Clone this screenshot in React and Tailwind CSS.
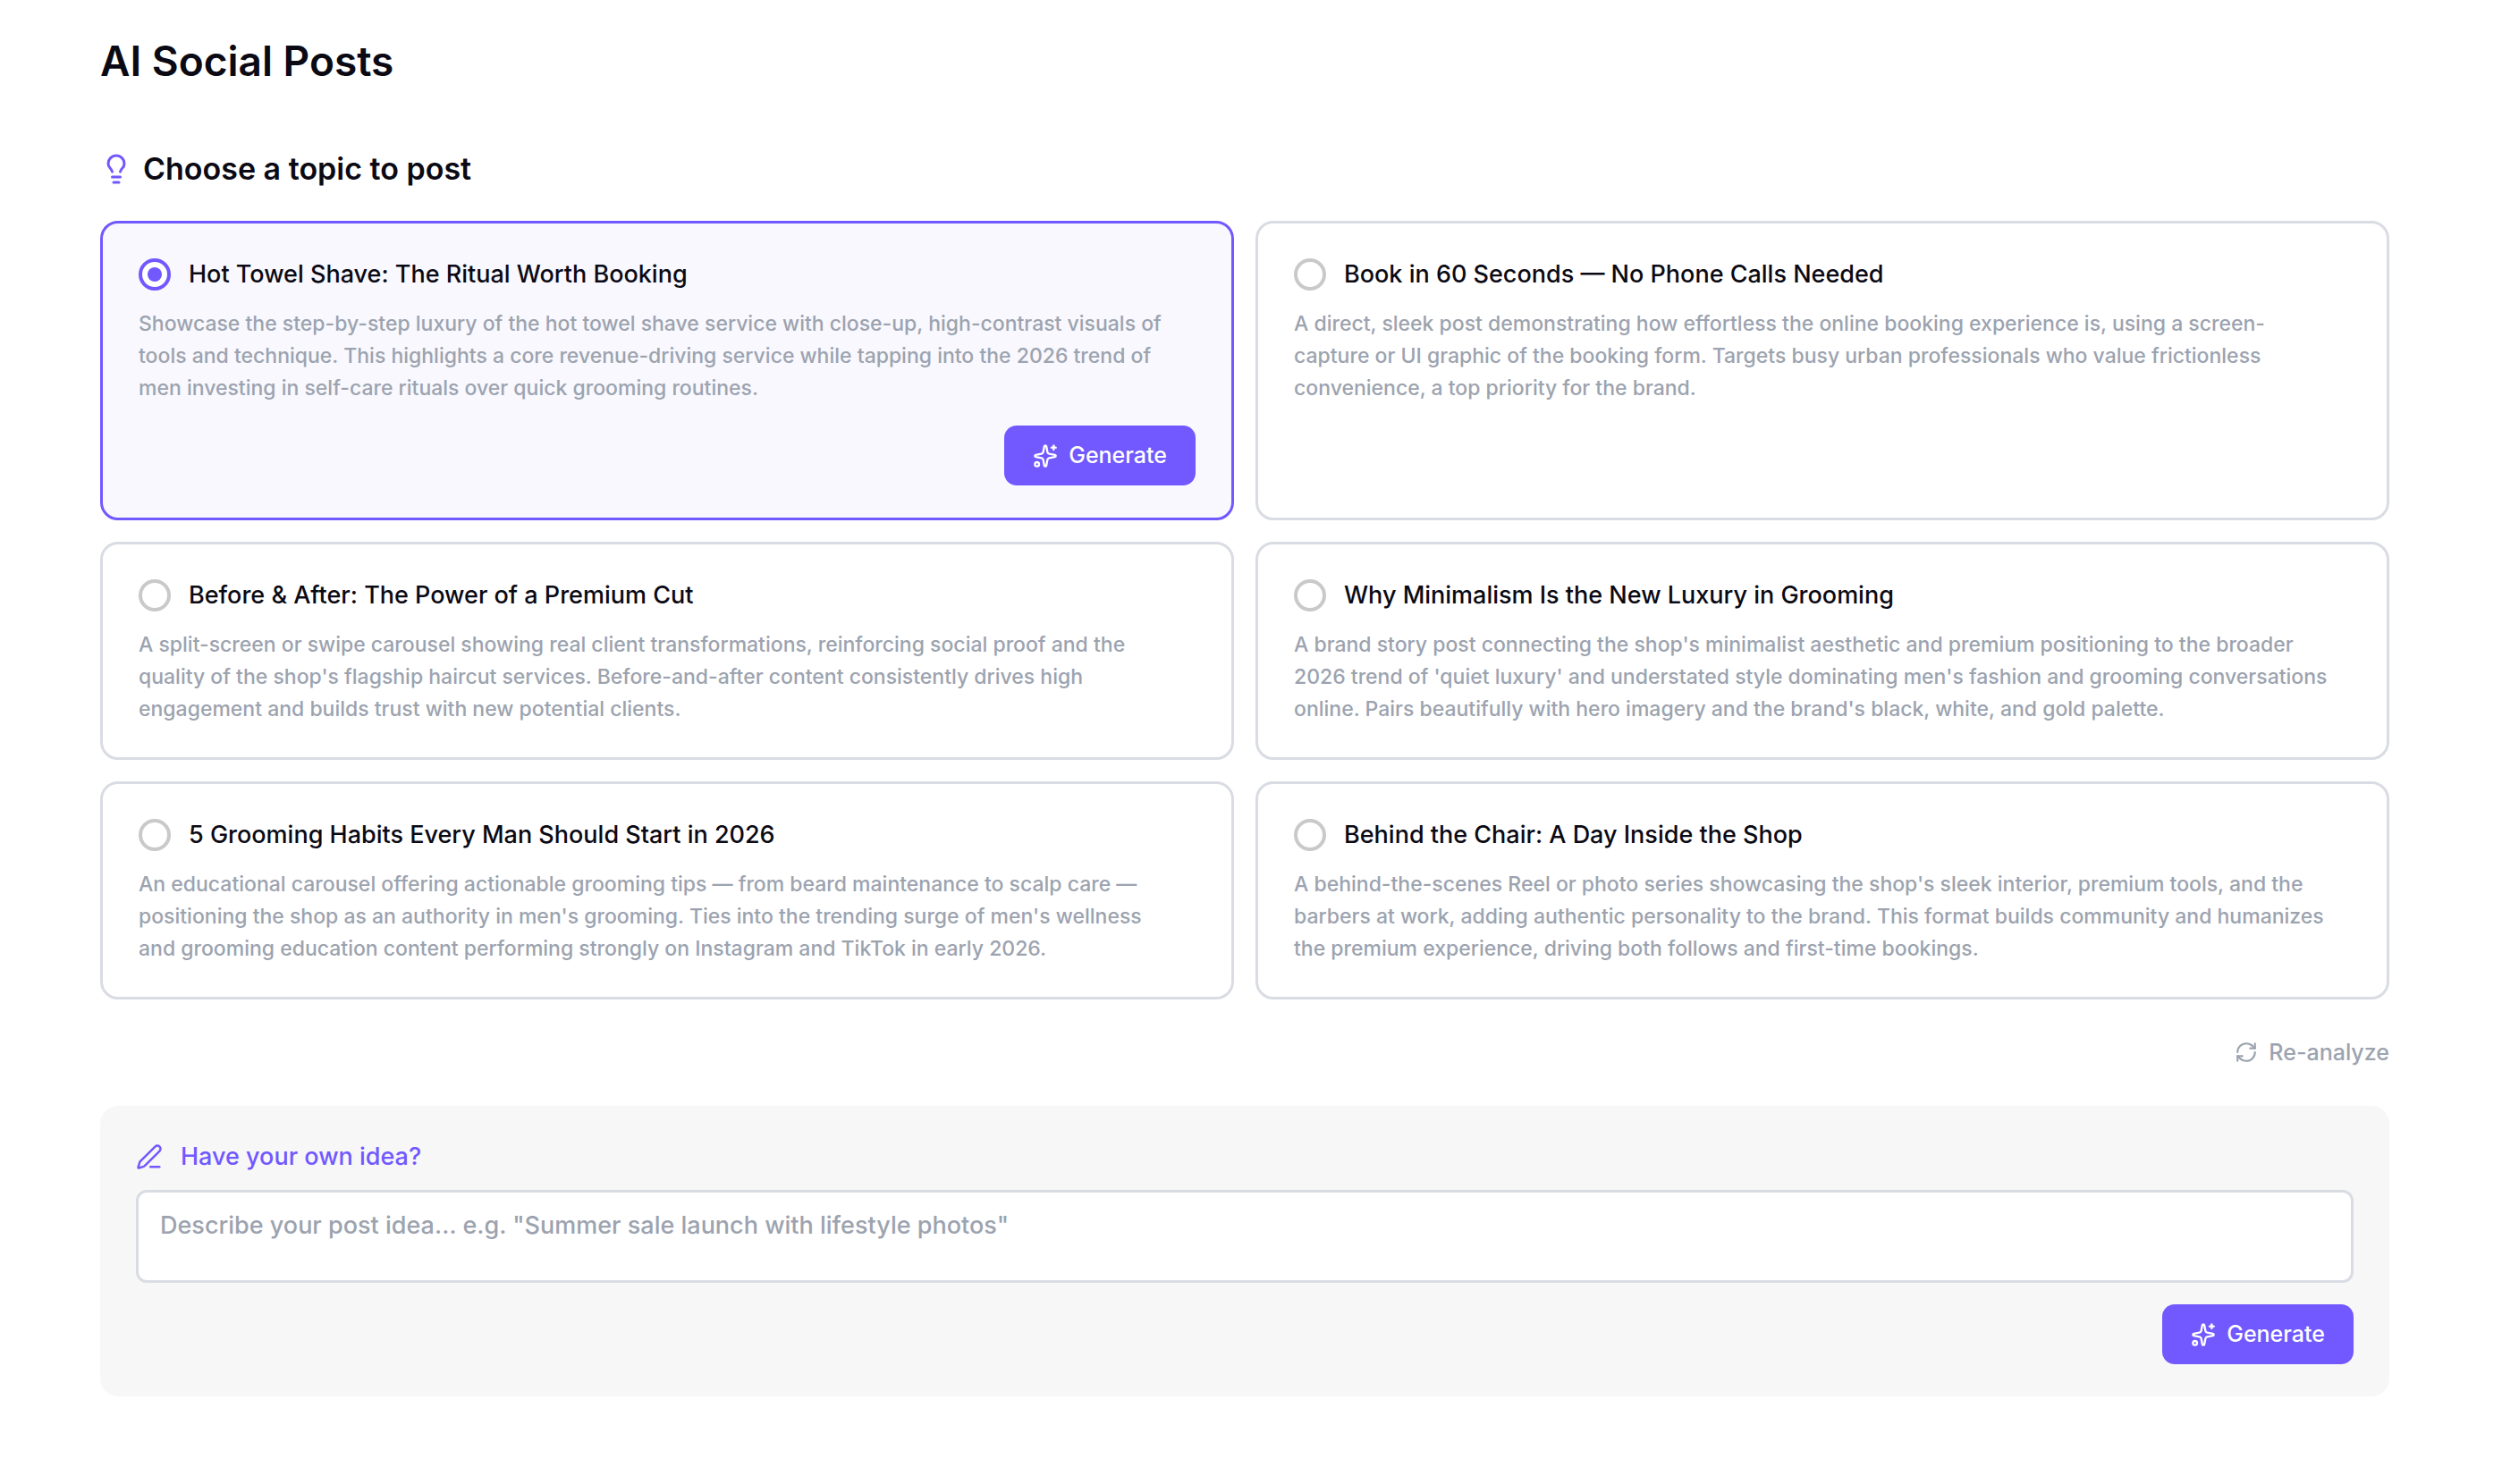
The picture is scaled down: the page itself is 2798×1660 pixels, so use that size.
import { useState } from 'react'
import { Lightbulb, RefreshCw, Sparkles } from 'lucide-react'

const TOPICS = [
  {
    title: 'Hot Towel Shave: The Ritual Worth Booking',
    text: 'Showcase the step-by-step luxury of the hot towel shave service with close-up, high-contrast visuals of tools and technique. This highlights a core revenue-driving service while tapping into the 2026 trend of men investing in self-care rituals over quick grooming routines.',
  },
  {
    title: 'Book in 60 Seconds — No Phone Calls Needed',
    text: 'A direct, sleek post demonstrating how effortless the online booking experience is, using a screen-capture or UI graphic of the booking form. Targets busy urban professionals who value frictionless convenience, a top priority for the brand.',
  },
  {
    title: 'Before & After: The Power of a Premium Cut',
    text: "A split-screen or swipe carousel showing real client transformations, reinforcing social proof and the quality of the shop's flagship haircut services. Before-and-after content consistently drives high engagement and builds trust with new potential clients.",
  },
  {
    title: 'Why Minimalism Is the New Luxury in Grooming',
    text: "A brand story post connecting the shop's minimalist aesthetic and premium positioning to the broader 2026 trend of 'quiet luxury' and understated style dominating men's fashion and grooming conversations online. Pairs beautifully with hero imagery and the brand's black, white, and gold palette.",
  },
  {
    title: '5 Grooming Habits Every Man Should Start in 2026',
    text: "An educational carousel offering actionable grooming tips — from beard maintenance to scalp care — positioning the shop as an authority in men's grooming. Ties into the trending surge of men's wellness and grooming education content performing strongly on Instagram and TikTok in early 2026.",
  },
  {
    title: 'Behind the Chair: A Day Inside the Shop',
    text: "A behind-the-scenes Reel or photo series showcasing the shop's sleek interior, premium tools, and the barbers at work, adding authentic personality to the brand. This format builds community and humanizes the premium experience, driving both follows and first-time bookings.",
  },
]

function PenIcon() {
  return (
    <svg
      viewBox="0 0 24 24"
      className="size-[30px] shrink-0"
      fill="none"
      stroke="currentColor"
      strokeWidth="2"
      strokeLinecap="round"
      strokeLinejoin="round"
      aria-hidden="true"
    >
      <path d="M13 21h8" />
      <path d="M21.174 6.812a1 1 0 0 0-3.986-3.987L3.842 16.174a2 2 0 0 0-.5.83l-1.321 4.352a.5.5 0 0 0 .623.622l4.353-1.32a2 2 0 0 0 .83-.497z" />
    </svg>
  )
}

function GenerateButton() {
  return (
    <button
      type="button"
      className="flex h-[67px] items-center gap-3 rounded-[14px] bg-[#7158ff] px-8 text-[25px] font-medium text-white"
    >
      <Sparkles size={28} />
      Generate
    </button>
  )
}

function TopicCard({ topic, selected, onSelect }) {
  return (
    <div
      className={`rounded-[20px] border-3 px-10 py-9 ${
        selected ? 'border-[#7158ff] bg-[#f8f8fe]' : 'border-[#d9dce3] bg-white'
      }`}
    >
      <label className="flex cursor-pointer items-center gap-5 text-[27px] leading-[42px] font-medium text-[#0b0a14]">
        <input
          type="radio"
          name="topic"
          checked={selected}
          onChange={onSelect}
          className="grid size-9 shrink-0 appearance-none place-items-center rounded-full border-4 border-[#c9c9c9] bg-white before:size-4 before:rounded-full checked:border-[#7158ff] checked:before:bg-[#7158ff]"
        />
        {topic.title}
      </label>
      <p className="mt-4 pr-3.5 text-[23px] leading-9 font-medium text-[#9ca3af]">{topic.text}</p>
      {selected && (
        <div className="mt-6 flex justify-end">
          <GenerateButton />
        </div>
      )}
    </div>
  )
}

export default function App() {
  const [selected, setSelected] = useState(0)
  const [idea, setIdea] = useState('')

  return (
    <main className="min-h-screen bg-white pt-10 pr-[126px] pb-24 pl-28 font-['Inter',sans-serif] text-[#0b0a14]">
      <h1 className="text-[46px] leading-[56px] font-semibold">AI Social Posts</h1>

      {/* Topics */}
      <h2 className="mt-[70px] flex items-center gap-3 text-[34px] leading-[46px] font-semibold">
        <Lightbulb size={36} className="text-[#7158ff]" />
        Choose a topic to post
      </h2>
      <div className="mt-[35px] grid grid-cols-2 gap-6">
        {TOPICS.map((topic, i) => (
          <TopicCard
            key={topic.title}
            topic={topic}
            selected={selected === i}
            onSelect={() => setSelected(i)}
          />
        ))}
      </div>

      <div className="mt-10 flex justify-end">
        <button
          type="button"
          className="flex items-center gap-3 text-[25px] leading-[38px] font-medium text-[#9ca3af]"
        >
          <RefreshCw size={26} />
          Re-analyze
        </button>
      </div>

      {/* Own idea */}
      <section className="mt-[41px] rounded-[20px] bg-[#f7f7f7] px-10 py-9">
        <label
          htmlFor="idea"
          className="flex items-center gap-5 text-[27px] leading-[42px] font-medium text-[#7158ff]"
        >
          <PenIcon />
          Have your own idea?
        </label>
        <textarea
          id="idea"
          value={idea}
          onChange={e => setIdea(e.target.value)}
          placeholder={'Describe your post idea… e.g. "Summer sale launch with lifestyle photos"'}
          className="mt-4 block h-[104px] w-full resize-none rounded-xl border-3 border-[#d9dce3] bg-white px-6 py-4 text-[27px] leading-[42px] font-medium placeholder-[#9ca3af] outline-none"
        />
        <div className="mt-6 flex justify-end">
          <GenerateButton />
        </div>
      </section>
    </main>
  )
}
